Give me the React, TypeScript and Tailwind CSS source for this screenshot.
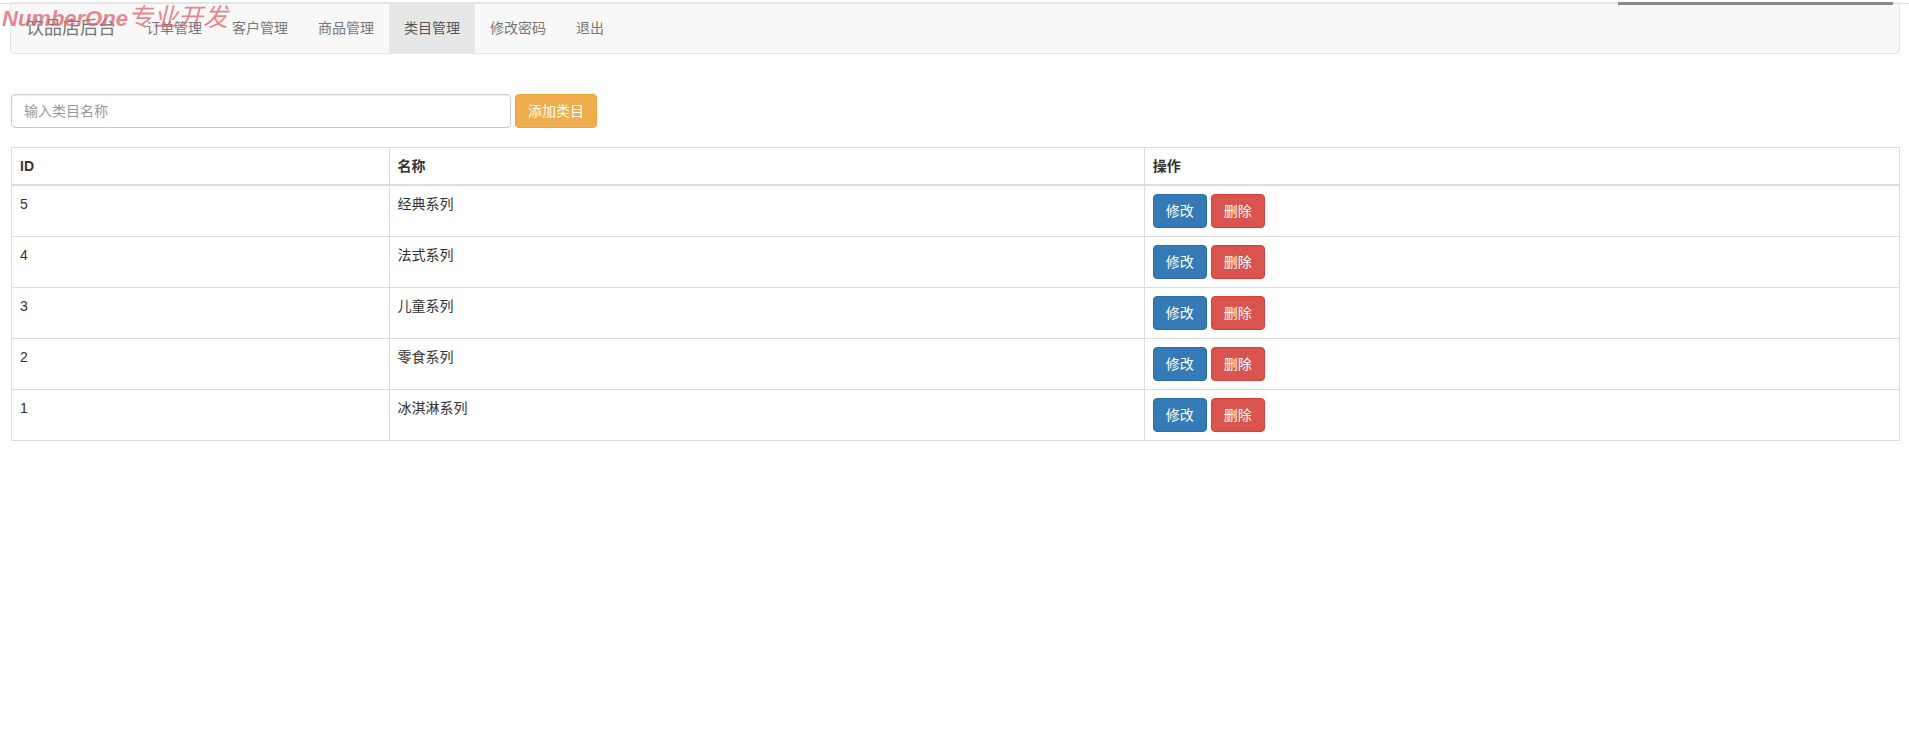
const font = "font-['Liberation_Sans','Noto_Sans_CJK_SC',sans-serif]";

const navLinks = [
  { label: "订单管理" },
  { label: "客户管理" },
  { label: "商品管理" },
  { label: "类目管理", active: true },
  { label: "修改密码" },
  { label: "退出" },
];

const categories = [
  { id: 5, name: "经典系列" },
  { id: 4, name: "法式系列" },
  { id: 3, name: "儿童系列" },
  { id: 2, name: "零食系列" },
  { id: 1, name: "冰淇淋系列" },
];

export default function App() {
  return (
    <div className={`relative min-h-[753px] bg-white text-[14px] leading-[20px] text-[#333] ${font}`}>
      {/* top strip from the browser chrome */}
      <div className="absolute left-0 right-0 top-[1px] h-px bg-[#e2e2e2]" />
      <div className="absolute left-[1618px] top-0 h-[3px] w-[275px] bg-[#8a8a8a]" />

      <nav className="ml-[10px] mt-[2px] flex h-[52px] w-[1890px] items-stretch rounded-[4px] border border-[#e7e7e7] bg-[#f8f8f8]">
        <a className="px-[15px] py-[15px] text-[18px] leading-[20px] text-[#777]">饮品店后台</a>
        {navLinks.map((l) => (
          <a
            key={l.label}
            className={`px-[15px] py-[15px] leading-[20px] ${
              l.active ? "bg-[#e7e7e7] text-[#555]" : "text-[#777]"
            }`}
          >
            {l.label}
          </a>
        ))}
      </nav>

      <div className="ml-[11px] mt-[40px] flex gap-[4px]">
        <input
          placeholder="输入类目名称"
          className="h-[34px] w-[500px] rounded-[4px] border border-[#ccc] px-[12px] text-[14px] text-[#555] shadow-[inset_0_1px_1px_rgba(0,0,0,0.075)] outline-none placeholder:text-[#999]"
        />
        <button
          type="button"
          className="h-[34px] rounded-[4px] border border-[#eea236] bg-[#f0ad4e] px-[12px] text-[14px] text-white"
        >
          添加类目
        </button>
      </div>

      <table className="ml-[11px] mt-[19px] w-[1889px] border-collapse border border-[#ddd]">
        <thead>
          <tr>
            <th className="w-[20%] border border-b-2 border-[#ddd] p-[8px] text-left align-bottom font-bold">ID</th>
            <th className="w-[40%] border border-b-2 border-[#ddd] p-[8px] text-left align-bottom font-bold">名称</th>
            <th className="w-[40%] border border-b-2 border-[#ddd] p-[8px] text-left align-bottom font-bold">操作</th>
          </tr>
        </thead>
        <tbody>
          {categories.map((c) => (
            <tr key={c.id}>
              <td className="border border-[#ddd] p-[8px] align-top">{c.id}</td>
              <td className="border border-[#ddd] p-[8px] align-top">{c.name}</td>
              <td className="border border-[#ddd] p-[8px] align-top">
                <div className="flex gap-[4px]">
                  <button
                    type="button"
                    className="h-[34px] rounded-[4px] border border-[#2e6da4] bg-[#337ab7] px-[12px] text-white"
                  >
                    修改
                  </button>
                  <button
                    type="button"
                    className="h-[34px] rounded-[4px] border border-[#d43f3a] bg-[#d9534f] px-[12px] text-white"
                  >
                    删除
                  </button>
                </div>
              </td>
            </tr>
          ))}
        </tbody>
      </table>

      {/* watermark */}
      <div className="pointer-events-none absolute left-[2px] top-[1px] whitespace-nowrap italic text-[#e0606c]/75">
        <span className="text-[22px] font-bold leading-[28px]">NumberOne</span>
        <span className="text-[25px] leading-[28px]">专业开发</span>
      </div>
    </div>
  );
}
